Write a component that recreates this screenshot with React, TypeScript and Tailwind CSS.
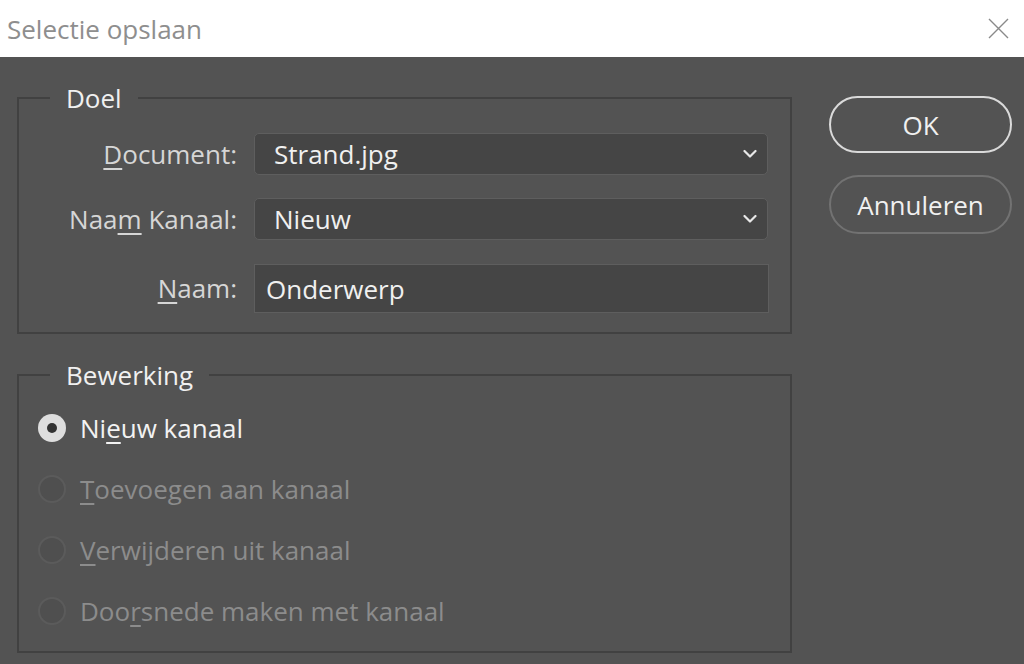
import { ReactNode } from 'react';

const Chevron = () => (
  <svg width="14" height="9" viewBox="0 0 14 9" className="absolute right-[10px] top-1/2 -translate-y-1/2">
    <path d="M1.5 1.5 L7 7 L12.5 1.5" fill="none" stroke="#e8e8e8" strokeWidth="2.2" strokeLinecap="round" strokeLinejoin="round" />
  </svg>
);

const Field = ({ label, children }: { label: ReactNode; children: ReactNode }) => (
  <div className="flex items-center">
    <div className="w-[235px] pr-[17px] text-right text-[#d6d6d6]">{label}</div>
    {children}
  </div>
);

const Select = ({ value }: { value: string }) => (
  <div className="relative flex h-[42px] w-[514px] items-center rounded-[5px] border border-[#5e5e5e] bg-[#454545] pl-[19px] text-[#f0f0f0]">
    {value}
    <Chevron />
  </div>
);

const Radio = ({ checked, label }: { checked?: boolean; label: ReactNode }) => (
  <div className="flex h-[30px] items-center">
    {checked ? (
      <div className="flex h-[28px] w-[28px] items-center justify-center rounded-full bg-[#dedede]">
        <div className="h-[10px] w-[10px] rounded-full bg-[#333333]" />
      </div>
    ) : (
      <div className="h-[28px] w-[28px] rounded-full border-2 border-[#5b5b5b] bg-[#4f4f4f]" />
    )}
    <span className={`ml-[14px] ${checked ? 'text-[#f2f2f2]' : 'text-[#8c8c8c]'}`}>{label}</span>
  </div>
);

export default function App() {
  return (
    <div className="h-[664px] w-[1024px] overflow-hidden bg-[#535353] text-[26px] leading-[30px]" style={{ fontFamily: '"Open Sans", "Noto Sans", sans-serif' }}>
      <div className="flex h-[57px] items-center justify-between bg-white pl-[7px] pr-[15px]">
        <span className="text-[#8e8e8e]">Selectie opslaan</span>
        <svg width="21" height="21" viewBox="0 0 21 21">
          <path d="M1 1 L20 20 M20 1 L1 20" stroke="#8a8a8a" strokeWidth="1.4" />
        </svg>
      </div>

      <div className="flex pl-[17px] pt-[26px]">
        <div className="flex w-[775px] flex-col gap-[26px]">
          <fieldset className="border-2 border-[#414141] pb-[19px] pt-[20px]">
            <legend className="ml-[31px] px-[16px] text-[#f0f0f0]">Doel</legend>
            <div className="flex flex-col gap-[23px]">
              <Field label={<><u className="underline-offset-4">D</u>ocument:</>}>
                <Select value="Strand.jpg" />
              </Field>
              <Field label={<>Naa<u className="underline-offset-4">m</u> Kanaal:</>}>
                <Select value="Nieuw" />
              </Field>
              <Field label={<><u className="underline-offset-4">N</u>aam:</>}>
                <div className="mt-px flex h-[49px] w-[515px] items-center border border-[#5e5e5e] bg-[#454545] pl-[11px] text-[#f0f0f0]">
                  Onderwerp
                </div>
              </Field>
            </div>
          </fieldset>

          <fieldset className="border-2 border-[#414141] pb-[25px] pt-[23px]">
            <legend className="ml-[31px] px-[16px] text-[#f0f0f0]">Bewerking</legend>
            <div className="flex flex-col gap-[31px] pl-[19px]">
              <Radio checked label={<>Ni<u className="underline-offset-4">e</u>uw kanaal</>} />
              <Radio label={<><u className="underline-offset-4">T</u>oevoegen aan kanaal</>} />
              <Radio label={<><u className="underline-offset-4">V</u>erwijderen uit kanaal</>} />
              <Radio label={<>Doo<u className="underline-offset-4">r</u>snede maken met kanaal</>} />
            </div>
          </fieldset>
        </div>

        <div className="ml-[37px] flex w-[183px] flex-col gap-[22px] pt-[13px]">
          <button className="h-[57px] rounded-full border-2 border-[#dadada] text-[#f0f0f0]">OK</button>
          <button className="h-[59px] rounded-full border-2 border-[#727272] text-[#f0f0f0]">Annuleren</button>
        </div>
      </div>
    </div>
  );
}
